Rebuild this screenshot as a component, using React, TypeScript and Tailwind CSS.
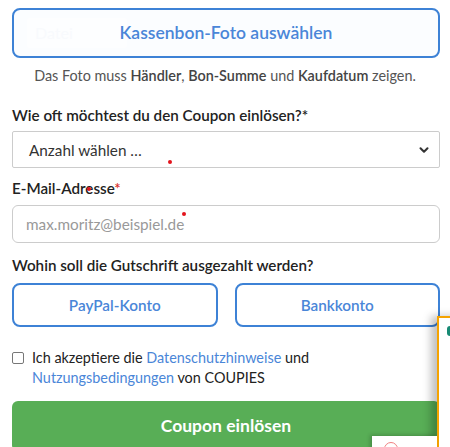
import { ChevronDown } from 'lucide-react'

const FONT = 'font-["Lato","Liberation_Sans",sans-serif]'

// Small red marker dots visible in the capture
const DOTS = [
  { x: 170, y: 162 },
  { x: 89, y: 189 },
  { x: 184, y: 214 },
]

const PayoutButton = ({ label }: { label: string }) => (
  <button
    type="button"
    className="flex h-[44px] flex-1 items-center justify-center rounded-[8px] border-2 border-[#3d82d6] bg-white text-[15.3px] font-semibold text-[#4a86d8]"
  >
    {label}
  </button>
)

export default function App() {
  return (
    <div className={`relative h-[447px] w-[450px] overflow-hidden bg-white ${FONT} text-[#222]`}>
      <div className="flex flex-col px-[12px] pt-[8px]">
        {/* Receipt photo picker */}
        <label className="relative flex h-[50px] w-[428px] cursor-pointer items-center justify-center rounded-[8px] border-2 border-[#3d82d6] bg-[#fbfdff]">
          <span className="absolute left-[13px] top-[8px] flex h-[30px] w-[100px] items-center rounded-[3px] bg-[#fdfeff] pl-[8px] text-[16px] leading-[20px] text-[#f8fafd]">
            Datei
          </span>
          <span className="relative text-[17.5px] font-semibold leading-[24px] text-[#4a86d8]">Kassenbon-Foto auswählen</span>
        </label>
        <p className="mt-[8px] text-center text-[14.4px] leading-[20px] text-[#555]">
          Das Foto muss <b className="font-semibold text-[#444]">Händler</b>,{' '}
          <b className="font-semibold text-[#444]">Bon-Summe</b> und{' '}
          <b className="font-semibold text-[#444]">Kaufdatum</b> zeigen.
        </p>

        {/* Redemption count */}
        <div className="mt-[19px] text-[15.2px] font-semibold leading-[20px]">Wie oft möchtest du den Coupon einlösen?*</div>
        <div className="mt-[6px] flex h-[37px] w-[428px] items-center justify-between rounded-[2px] border border-[#ccc] bg-white pl-[16px] pr-[8px]">
          <span className="text-[15.3px] leading-[20px] text-[#333]">Anzahl wählen …</span>
          <ChevronDown size={14} strokeWidth={3.5} className="text-[#333]" />
        </div>

        {/* Email */}
        <div className="mt-[10px] text-[15.2px] font-semibold leading-[20px]">
          E-Mail-Adresse<span className="text-[#d9302c]">*</span>
        </div>
        <div className="mt-[7px] flex h-[38px] w-[428px] items-center rounded-[6px] border border-[#ccc] bg-white pl-[13px]">
          <span className="text-[15.3px] leading-[20px] text-[#999]">max.moritz@beispiel.de</span>
        </div>

        {/* Payout */}
        <div className="mt-[12px] text-[15.2px] font-semibold leading-[20px]">Wohin soll die Gutschrift ausgezahlt werden?</div>
        <div className="mt-[8px] flex w-[428px] gap-[17px]">
          <PayoutButton label="PayPal-Konto" />
          <PayoutButton label="Bankkonto" />
        </div>

        {/* Terms */}
        <div className="mt-[21px] flex gap-[8px] text-[14.4px] leading-[20px] text-[#222]">
          <span className="mt-[4px] h-[12px] w-[12px] shrink-0 rounded-[2px] border border-[#777] bg-white" />
          <p>
            Ich akzeptiere die <span className="text-[#4a86d8]">Datenschutzhinweise</span> und
            <br />
            <span className="text-[#4a86d8]">Nutzungsbedingungen</span> von COUPIES
          </p>
        </div>

        <button
          type="button"
          className="mt-[13px] flex h-[50px] w-[428px] items-start justify-center rounded-[6px] bg-[#58ae56] pt-[13px] text-[17.5px] font-bold leading-[24px] text-white"
        >
          Coupon einlösen
        </button>
      </div>

      {/* Overlapping widget in the corner */}
      <div className="absolute left-[437px] top-[316px] h-[140px] w-[60px] border-2 border-[#f5a300] bg-white shadow-[-6px_0_8px_rgba(0,0,0,0.25)]">
        <div className="ml-[8px] mt-[8px] h-[10px] w-[8px] rounded-[3px] bg-[#178a74]" />
      </div>
      <div className="absolute left-[372px] top-[436px] flex h-[20px] w-[65px] items-start bg-white pl-[12px] pt-[6px] shadow-[-2px_-1px_4px_rgba(0,0,0,0.2)]">
        <span className="h-[14px] w-[14px] rounded-full border border-[#f08080]" />
      </div>

      {DOTS.map((d) => (
        <span
          key={`${d.x}-${d.y}`}
          className="absolute h-[4px] w-[4px] rounded-full bg-[#e3141c]"
          style={{ left: d.x - 2, top: d.y - 2 }}
        />
      ))}
    </div>
  )
}
